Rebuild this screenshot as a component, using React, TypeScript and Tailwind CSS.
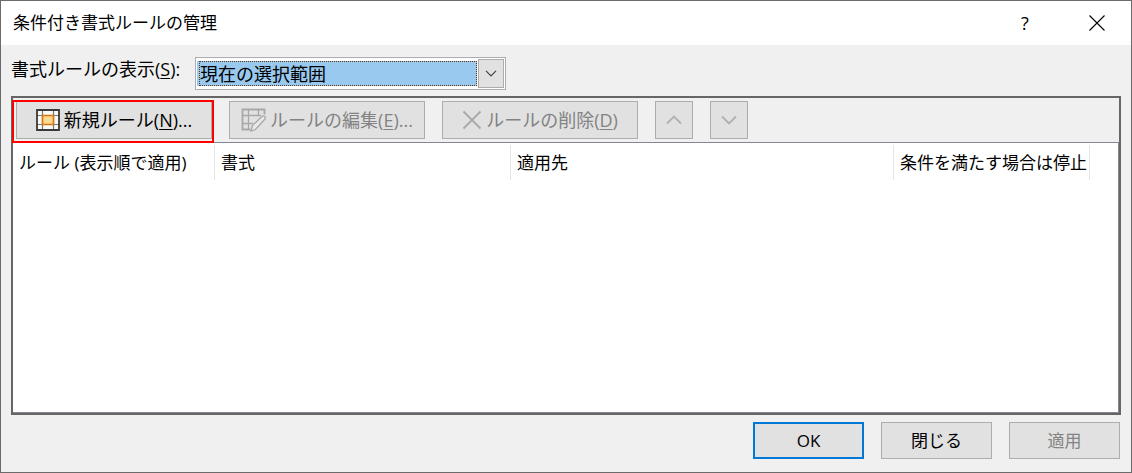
import { useState } from 'react'
import clsx from 'clsx'

const scopes = ['現在の選択範囲', 'このワークシート']

const columns = [
  { name: 'ルール (表示順で適用)', width: 'w-[202px]' },
  { name: '書式', width: 'w-[296px]' },
  { name: '適用先', width: 'w-[383px]' },
  { name: '条件を満たす場合は停止', width: 'w-[196px]' },
]

export default function App() {
  const [scope, setScope] = useState(scopes[0])

  return (
    <div className="min-h-screen flex flex-col bg-[#f0f0f0] border border-[#6b6b6b] text-black text-[17px] leading-6 font-[380] font-['Open_Sans','Noto_Sans_CJK_JP',sans-serif]">
      {/* Title bar */}
      <header className="flex items-center justify-between h-11 bg-white pl-3 pr-[10px]">
        <h1 className="font-[380]">条件付き書式ルールの管理</h1>
        <div className="flex items-center gap-9">
          <button type="button" aria-label="ヘルプ" className="w-6 h-8 text-lg">?</button>
          <button type="button" aria-label="閉じる" className="w-12 h-8 flex items-center justify-center">
            <svg width="16" height="16" viewBox="0 0 16 16" fill="none" stroke="#000" strokeWidth="1.1">
              <path d="M.5.5l15 15M15.5.5l-15 15" />
            </svg>
          </button>
        </div>
      </header>

      <main className="flex-1 flex flex-col px-[10px] pt-3 pb-[13px]">
        {/* Scope selector */}
        <div className="flex items-start text-lg leading-6">
          <label htmlFor="scope" className="w-[184px] shrink-0 whitespace-nowrap">
            書式ルールの表示(<u className="underline-offset-2">S</u>):
          </label>
          <div className="flex w-[311px] h-[33px] gap-px p-px bg-white border border-[#abadb3]">
            <div className="flex-1 my-[2px] pl-[2px] bg-[#99c9ef]">
              <select
                id="scope"
                value={scope}
                onChange={(e) => setScope(e.target.value)}
                className="appearance-none block w-full h-[25px] leading-[22px] bg-[#99c9ef] border border-dotted border-[#663610] outline-none"
              >
                {scopes.map((s) => <option key={s}>{s}</option>)}
              </select>
            </div>
            <span className="w-[26px] flex items-center justify-center bg-[#e1e1e1] border border-[#adadad] pointer-events-none">
              <svg width="12" height="7" viewBox="0 0 12 7" fill="none" stroke="#404040" strokeWidth="1.2">
                <path d="M1 .8l5 5 5-5" />
              </svg>
            </span>
          </div>
        </div>

        <section className="flex-1 flex flex-col mt-[6px] border-2 border-[#666]">
          {/* Toolbar */}
          <div className="flex gap-[17px] pl-[3px] pt-[3px] pb-[3px] text-lg leading-6">
            <div className="relative">
              <ToolButton>
                <NewRuleIcon />
                <span>新規ルール(<u className="underline-offset-2">N</u>)...</span>
              </ToolButton>
              <span className="absolute -left-1 -top-px -right-[2px] -bottom-1 border-2 border-[#f00] pointer-events-none" />
            </div>
            <ToolButton disabled>
              <EditRuleIcon />
              <span>ルールの編集(<u className="underline-offset-2">E</u>)...</span>
            </ToolButton>
            <ToolButton disabled>
              <svg width="20" height="20" viewBox="0 0 20 20" fill="none" stroke="#a9a9a9" strokeWidth="1.8">
                <path d="M1.5 1.5l17 17M18.5 1.5l-17 17" />
              </svg>
              <span>ルールの削除(<u className="underline-offset-2">D</u>)</span>
            </ToolButton>
            <ToolButton disabled square label="上へ移動">
              <svg width="16" height="10" viewBox="0 0 16 10" fill="none" stroke="#b0b0b0" strokeWidth="1.8">
                <path d="M1 8.5l7-7 7 7" />
              </svg>
            </ToolButton>
            <ToolButton disabled square label="下へ移動">
              <svg width="16" height="10" viewBox="0 0 16 10" fill="none" stroke="#b0b0b0" strokeWidth="1.8">
                <path d="M1 1.5l7 7 7-7" />
              </svg>
            </ToolButton>
          </div>

          {/* Rule list */}
          <div className="flex-1 bg-white border border-[#828790] border-l-0 overflow-hidden">
            <table className="table-fixed w-full">
              <thead>
                <tr>
                  {columns.map((c) => (
                    <th key={c.name} scope="col" className={clsx('p-0 pt-[2px] font-[380] text-left', c.width)}>
                      <div className="h-[35px] pl-[6px] flex items-center whitespace-nowrap border-r border-[#e5e5e5]">{c.name}</div>
                    </th>
                  ))}
                  <td />
                </tr>
              </thead>
            </table>
          </div>
        </section>

        {/* Footer */}
        <footer className="flex justify-end gap-[17px] mt-[7px] pr-px">
          <button type="button" className="w-[111px] h-[37px] bg-[#e1e1e1] border-2 border-[#0078d7]">OK</button>
          <button type="button" className="w-[111px] h-[37px] bg-[#e1e1e1] border border-[#adadad]">閉じる</button>
          <button type="button" disabled className="w-[111px] h-[37px] bg-[#e1e1e1] border border-[#adadad] text-[#838383]">適用</button>
        </footer>
      </main>
    </div>
  )
}

type ToolButtonProps = {
  children: React.ReactNode
  disabled?: boolean
  square?: boolean
  label?: string
}

function ToolButton({ children, disabled, square, label }: ToolButtonProps) {
  return (
    <button
      type="button"
      disabled={disabled}
      aria-label={label}
      className={clsx(
        'h-[38px] flex items-center justify-center gap-1 whitespace-nowrap bg-[#e1e1e1] border border-[#adadad]',
        square ? 'w-[38px]' : 'w-[196px]',
        disabled && 'text-[#838383]'
      )}
    >
      {children}
    </button>
  )
}

function NewRuleIcon() {
  return (
    <svg width="24" height="22" viewBox="0 0 24 22" fill="none">
      <path d="M1 1h22v20H1z" fill="#fafafa" />
      <path d="M6.5 1v20M17.5 1v20M1 6.5h22M1 15.5h22" stroke="#797774" strokeWidth="1.2" />
      <path d="M1 1h22v20H1z" stroke="#3a3a38" strokeWidth="1.8" />
      <path d="M6.5 6.5h11v9h-11z" fill="#f8db8f" stroke="#e07310" strokeWidth="1.6" />
    </svg>
  )
}

function EditRuleIcon() {
  return (
    <svg width="25" height="24" viewBox="0 0 25 24" fill="none" stroke="#a8a8a8">
      <path d="M9.5 21.5h-8v-20h22v5" strokeWidth="1.8" />
      <path d="M7.5 2v19M17.5 2v6M2 7.500h18M2 15.500h10" strokeWidth="1.300" />
      <path d="M10 23l1.500-5.500 9.500-9a1.800 1.800 0 0 1 2.700 2.700L14.500 21.500z" fill="#e9e9e9" strokeWidth="1.300" />
    </svg>
  )
}
